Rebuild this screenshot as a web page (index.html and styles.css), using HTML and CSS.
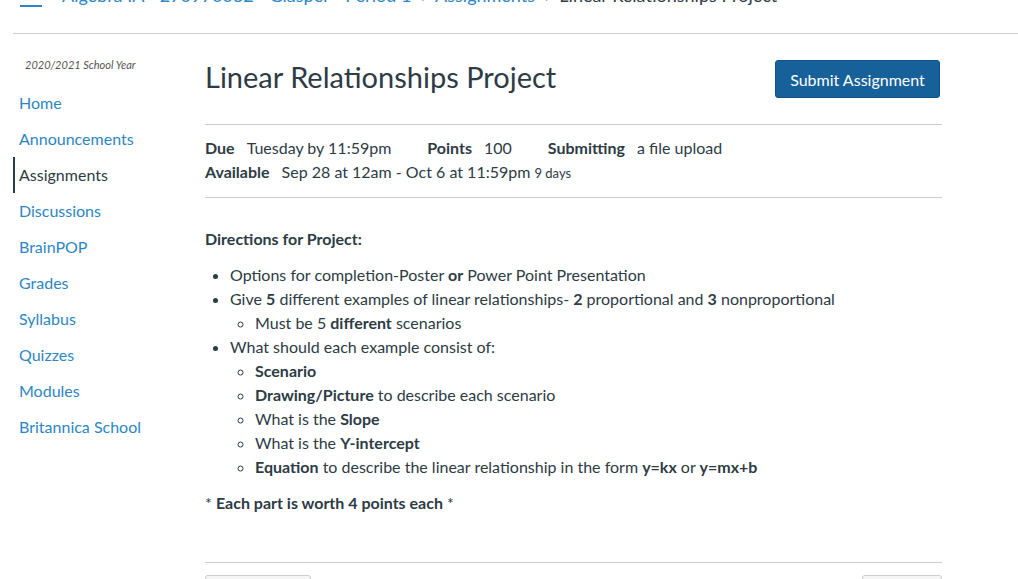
FILE: index.html
```html
<!DOCTYPE html>
<html lang="en">
<head>
<meta charset="utf-8">
<title>Linear Relationships Project</title>
<link rel="stylesheet" href="styles.css">
</head>
<body>
<header class="topbar">
  <button class="hamburger" aria-label="Menu"><span></span><span></span><span></span></button>
  <nav class="crumbs">
    <a href="#">Algebra IA - 270970032 - Glasper - Period 1</a>
    <span class="sep">&#8250;</span>
    <a href="#">Assignments</a>
    <span class="sep">&#8250;</span>
    <span class="current">Linear Relationships Project</span>
  </nav>
</header>
<div class="layout">
  <aside class="sidenav">
    <div class="term">2020/2021 School Year</div>
    <ul class="navlist">
      <li><a href="#">Home</a></li>
      <li><a href="#">Announcements</a></li>
      <li class="active"><a href="#">Assignments</a></li>
      <li><a href="#">Discussions</a></li>
      <li><a href="#">BrainPOP</a></li>
      <li><a href="#">Grades</a></li>
      <li><a href="#">Syllabus</a></li>
      <li><a href="#">Quizzes</a></li>
      <li><a href="#">Modules</a></li>
      <li><a href="#">Britannica School</a></li>
    </ul>
  </aside>
  <main class="content">
    <div class="title-row">
      <h1 class="title">Linear Relationships Project</h1>
      <button class="btn-primary">Submit Assignment</button>
    </div>
    <div class="details">
      <div class="detail-line">
        <span class="item"><b>Due</b><span>Tuesday by 11:59pm</span></span>
        <span class="item"><b>Points</b><span>100</span></span>
        <span class="item"><b>Submitting</b><span>a file upload</span></span>
      </div>
      <div class="detail-line">
        <span class="item"><b>Available</b><span>Sep 28 at 12am - Oct 6 at 11:59pm <small>9 days</small></span></span>
      </div>
    </div>
    <div class="description">
      <p class="heading"><b>Directions for Project:</b></p>
      <ul class="bullets">
        <li>Options for completion-Poster <b>or</b> Power Point Presentation</li>
        <li>Give <b>5</b> different examples of linear relationships- <b>2</b> proportional and <b>3</b> nonproportional
          <ul>
            <li>Must be 5 <b>different</b> scenarios</li>
          </ul>
        </li>
        <li>What should each example consist of:
          <ul>
            <li><b>Scenario</b></li>
            <li><b>Drawing/Picture</b> to describe each scenario</li>
            <li>What is the <b>Slope</b></li>
            <li>What is the <b>Y-intercept</b></li>
            <li><b>Equation</b> to describe the linear relationship in the form <b>y=kx</b> or <b>y=mx+b</b></li>
          </ul>
        </li>
      </ul>
      <p class="note">* <b>Each part is worth 4 points each</b> *</p>
    </div>
    <div class="pager">
      <button class="btn-secondary prev">&nbsp;</button>
      <button class="btn-secondary next">&nbsp;</button>
    </div>
  </main>
</div>
</body>
</html>
```

FILE: styles.css
```css
* { box-sizing: border-box; }
html, body { margin: 0; padding: 0; background: #fff; }
body {
  font-family: Lato, "Open Sans", "Liberation Sans", sans-serif;
  color: #2d3b45;
  font-size: 16px;
  overflow: hidden;
}
a { color: #2d86c3; text-decoration: none; }

.topbar {
  margin: -17px 0 0 13px;
  height: 51px;
  border-bottom: 1px solid #c7cdd1;
  display: flex;
  align-items: flex-start;
}
.hamburger {
  margin: 8px 0 0 7px;
  padding: 0;
  border: 0;
  background: none;
  width: 22px;
  display: flex;
  flex-direction: column;
  gap: 5px;
}
.hamburger span {
  display: block;
  height: 2px;
  width: 22px;
  background: #2d86c3;
}
.crumbs {
  margin-left: 20px;
  font-size: 18px;
  line-height: 24px;
  white-space: nowrap;
}
.crumbs .sep { color: #73818c; margin: 0 5px; }
.crumbs .current { color: #2d3b45; }

.layout { display: flex; }
.sidenav { width: 205px; flex: none; padding-left: 13px; }
.term {
  margin: 23px 0 0 12px;
  font-size: 11px;
  line-height: 16px;
  font-style: italic;
  color: #555;
}
.navlist { list-style: none; margin: 12px 0 0; padding: 0; }
.navlist li { padding: 6px 0 6px 6px; line-height: 24px; }
.navlist li.active { border-left: 2px solid #2d3b45; padding-left: 4px; }
.navlist li.active a { color: #2d3b45; }

.content { width: 737px; flex: none; }
.title-row {
  margin-top: 26px;
  display: flex;
  justify-content: space-between;
  align-items: center;
  padding-right: 2px;
}
.title {
  margin: 0 0 4px;
  font-size: 29px;
  font-weight: 400;
  line-height: 32px;
  color: #2d3b45;
}
.btn-primary {
  height: 38px;
  width: 165px;
  background: #17619a;
  color: #fff;
  border: 1px solid #115286;
  border-radius: 3px;
  font-family: inherit;
  font-size: 16px;
  padding: 0;
}
.details {
  margin-top: 26px;
  border-top: 1px solid #c7cdd1;
  border-bottom: 1px solid #c7cdd1;
  padding: 11px 0 12px;
  line-height: 24px;
}
.detail-line { display: flex; gap: 36px; }
.item b { margin-right: 12px; font-weight: 700; }
.item small { font-size: 13px; }

.description { line-height: 24px; }
.heading { margin: 29px 0 12px; }
.bullets { margin: 0; padding-left: 25px; }
.bullets ul { margin: 0; padding-left: 25px; list-style: circle; }
.note { margin: 12px 0 0; }

.pager {
  margin-top: 47px;
  border-top: 1px solid #c7cdd1;
  padding-top: 12px;
  display: flex;
  justify-content: space-between;
}
.btn-secondary {
  height: 38px;
  background: #f5f5f5;
  border: 1px solid #c7cdd1;
  border-radius: 3px;
}
.prev { width: 106px; }
.next { width: 80px; }
```
